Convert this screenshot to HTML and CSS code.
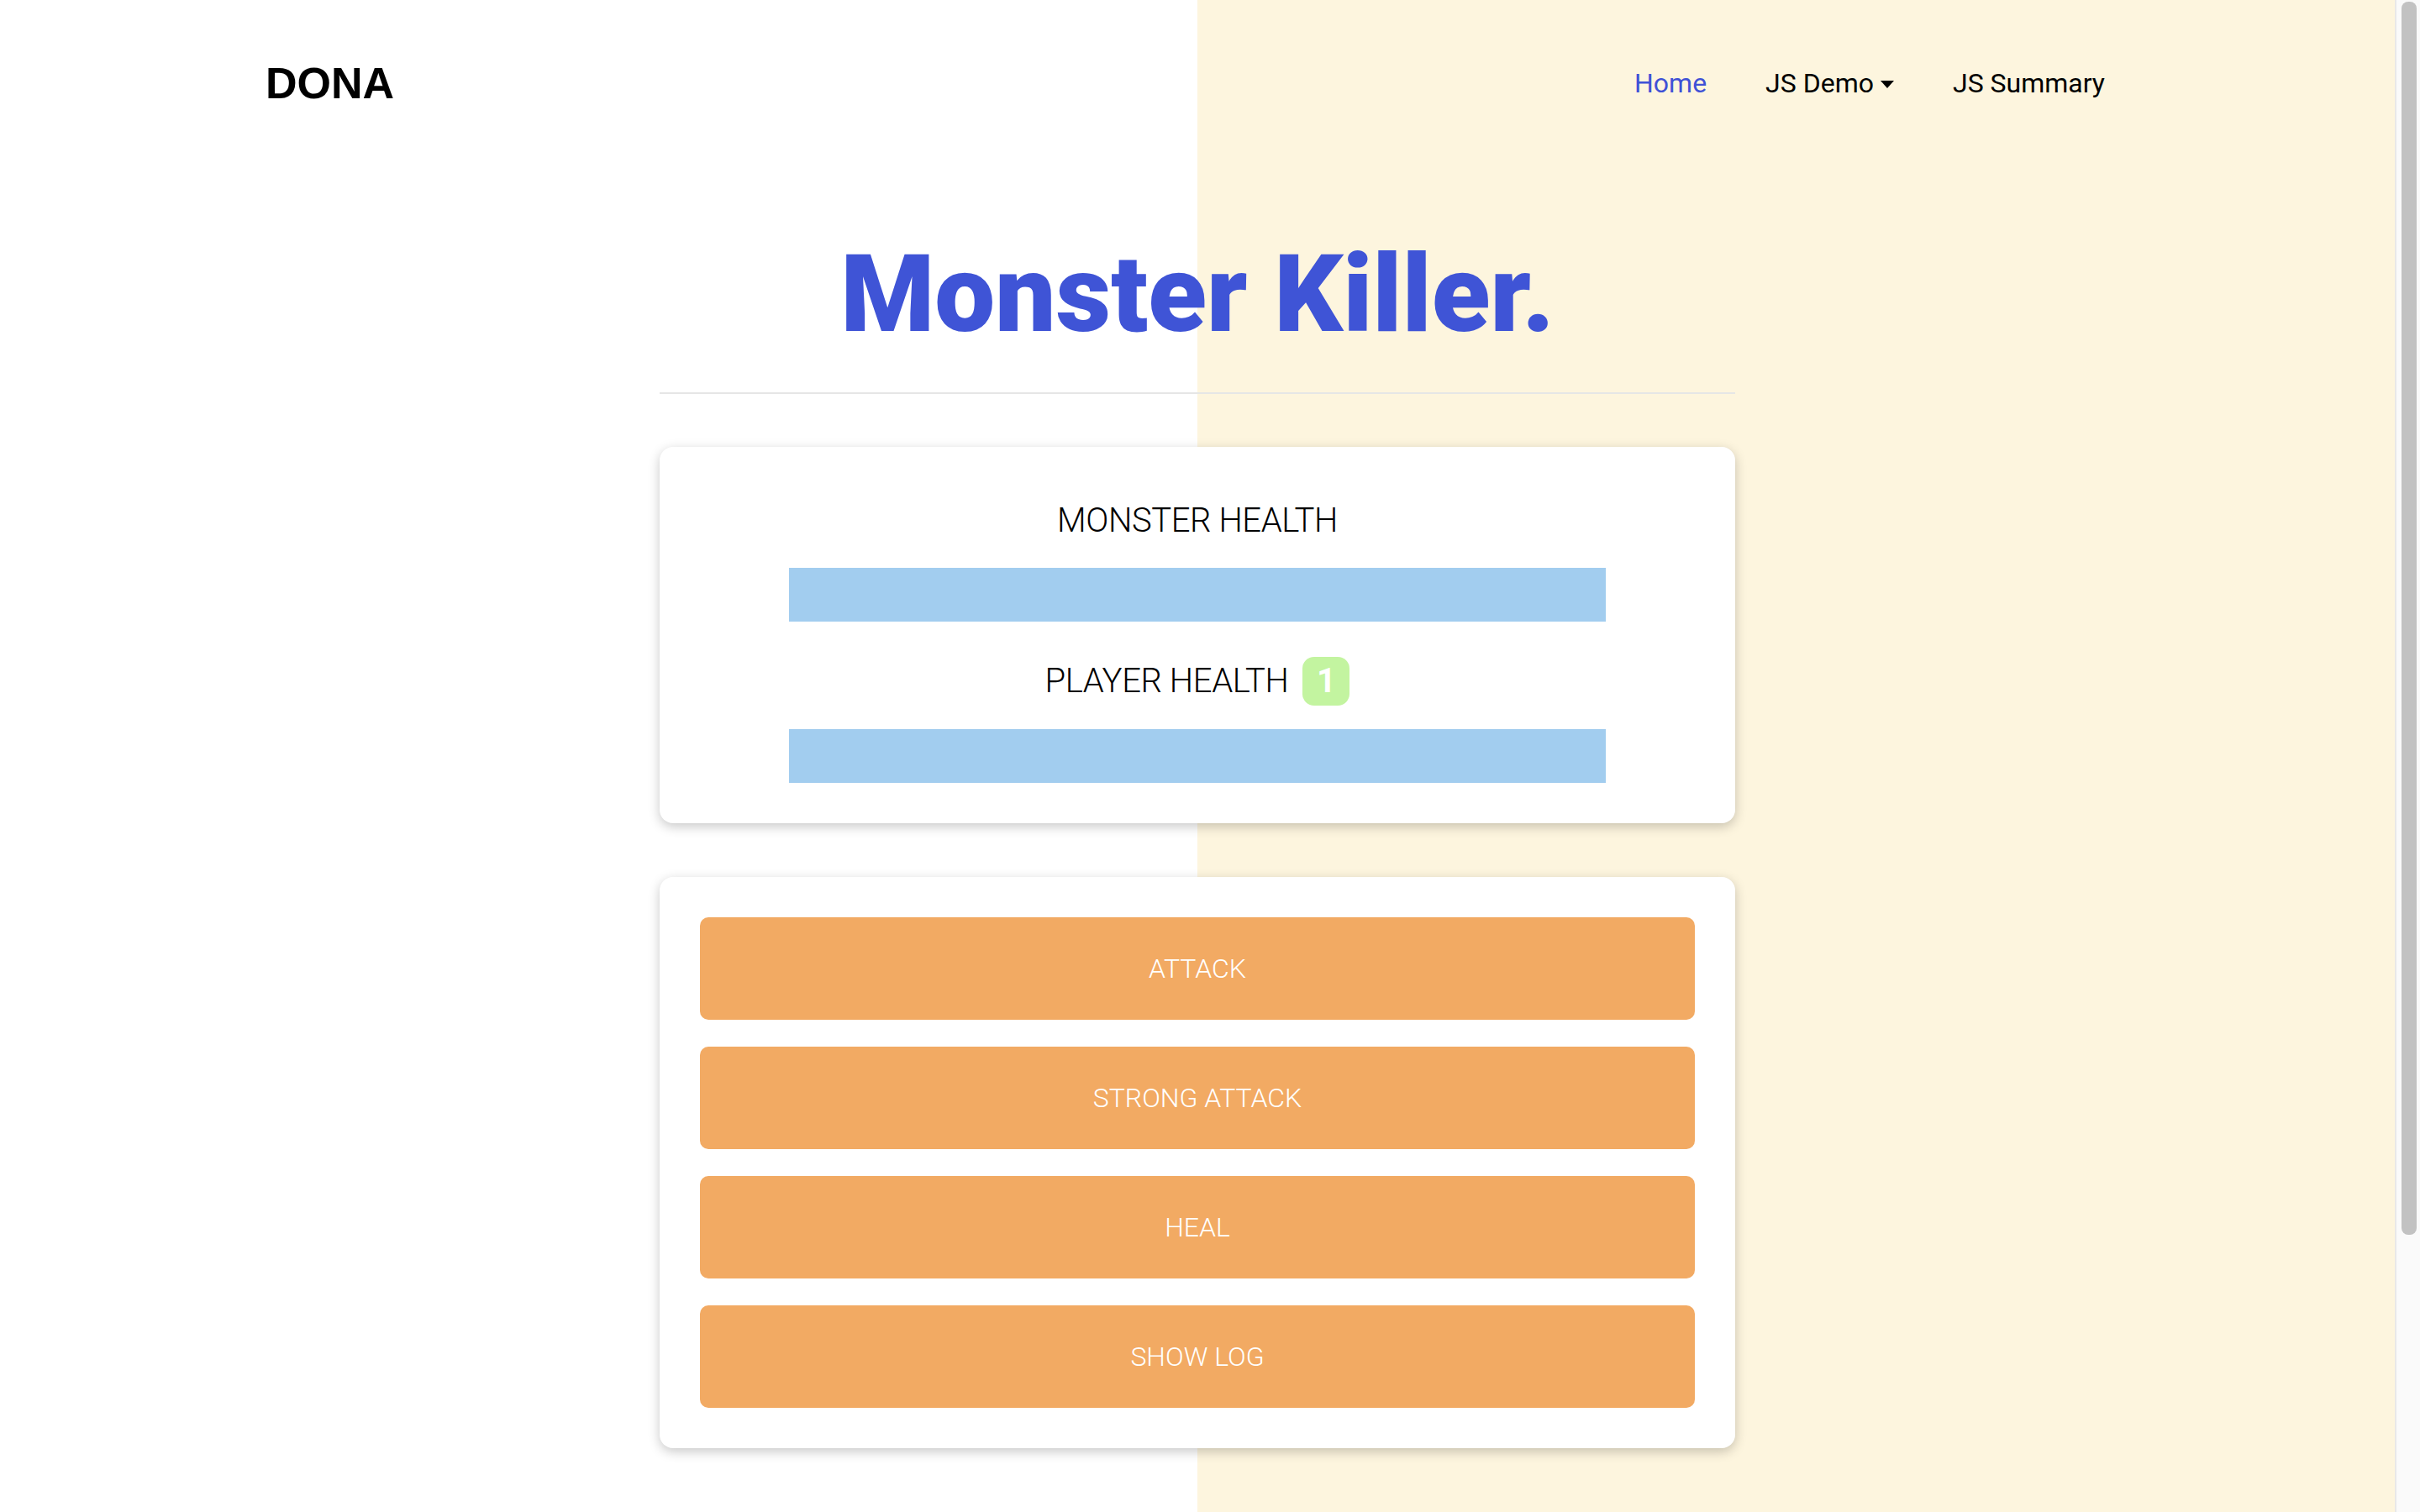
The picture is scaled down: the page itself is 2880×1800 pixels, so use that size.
FILE: index.html
```html
<!DOCTYPE html>
<html lang="en">
<head>
<meta charset="utf-8">
<title>Monster Killer</title>
<link rel="stylesheet" href="styles.css">
</head>
<body>
<header class="topbar">
  <div class="topbar-inner">
    <a class="brand" href="#">DONA</a>
    <nav class="nav">
      <a class="nav-link active" href="#">Home</a>
      <a class="nav-link dropdown" href="#">JS Demo<span class="caret"></span></a>
      <a class="nav-link" href="#">JS Summary</a>
    </nav>
  </div>
</header>
<main class="main">
  <h1 class="title">Monster Killer.</h1>
  <hr class="divider">
  <section class="card health">
    <h2 class="label">MONSTER HEALTH</h2>
    <div class="bar"></div>
    <div class="label-row">
      <h2 class="label">PLAYER HEALTH</h2>
      <span class="badge">1</span>
    </div>
    <div class="bar bar-player"></div>
  </section>
  <section class="card controls">
    <button class="btn">ATTACK</button>
    <button class="btn">STRONG ATTACK</button>
    <button class="btn">HEAL</button>
    <button class="btn">SHOW LOG</button>
  </section>
</main>
<div class="scrollbar" aria-hidden="true"><div class="scrollbar-thumb"></div></div>
</body>
</html>
```
FILE: styles.css
```css
html {
  background: linear-gradient(90deg, #ffffff 1425px, #fdf5de 1425px);
  min-height: 100%;
}
body {
  margin: 0 30px 0 0;
  font-family: Roboto, "Noto Sans", sans-serif;
  color: #000;
  min-height: 2207px;
}
.scrollbar {
  position: fixed;
  top: 0;
  right: 0;
  width: 28px;
  height: 100%;
  background: #fafafa;
  border-left: 2px solid #e8e8e8;
}
.scrollbar-thumb {
  margin: 2px 4px 0 6px;
  height: 1468px;
  background: #c2c2c2;
  border-radius: 8px;
}
.topbar-inner {
  width: 2224px;
  margin: 0 auto;
  height: 198px;
  display: flex;
  align-items: center;
  justify-content: space-between;
}
.brand {
  font-family: "Liberation Sans", Arial, sans-serif;
  font-weight: 700;
  font-size: 52px;
  color: #000;
  text-decoration: none;
  padding-left: 3px;
}
.nav {
  display: flex;
  gap: 70px;
  padding-right: 32px;
}
.nav-link {
  font-size: 32px;
  color: #000;
  text-decoration: none;
  display: flex;
  align-items: center;
}
.nav-link.active {
  color: #3f51d6;
}
.caret {
  display: inline-block;
  margin-left: 8px;
  border-top: 9px solid #000;
  border-left: 8px solid transparent;
  border-right: 8px solid transparent;
  margin-top: 2px;
}
.main {
  width: 1280px;
  margin: 0 auto;
}
.title {
  margin: 88px 0 0;
  font-size: 128px;
  line-height: 128px;
  font-weight: 900;
  color: #3f54d6;
  text-align: center;
}
.divider {
  margin: 53px 0 0;
  border: 0;
  border-top: 2px solid #e6e6e6;
}
.card {
  background: #fff;
  border-radius: 16px;
  box-shadow: 0 4px 14px rgba(0, 0, 0, 0.22);
}
.health {
  margin-top: 63px;
  padding: 64px 32px 48px;
  display: flex;
  flex-direction: column;
  align-items: center;
}
.label {
  margin: 0;
  font-size: 40px;
  line-height: 48px;
  font-weight: 300;
  letter-spacing: -0.4px;
}
.bar {
  width: 80%;
  height: 64px;
  background: #a2cdef;
  margin-top: 32px;
}
.label-row {
  display: flex;
  align-items: center;
  gap: 17px;
  margin-top: 42px;
  height: 58px;
}
.badge {
  background: #c3f4a0;
  color: #fff;
  font-weight: 700;
  font-size: 40px;
  line-height: 58px;
  height: 58px;
  min-width: 56px;
  text-align: center;
  border-radius: 14px;
}
.bar-player {
  margin-top: 28px;
}
.controls {
  margin-top: 64px;
  padding: 48px;
  display: flex;
  flex-direction: column;
  gap: 32px;
}
.btn {
  height: 122px;
  border: 0;
  border-radius: 10px;
  background: #f2aa63;
  color: #fff;
  font-family: Roboto, "Noto Sans", sans-serif;
  font-size: 32px;
  font-weight: 300;
}
```
